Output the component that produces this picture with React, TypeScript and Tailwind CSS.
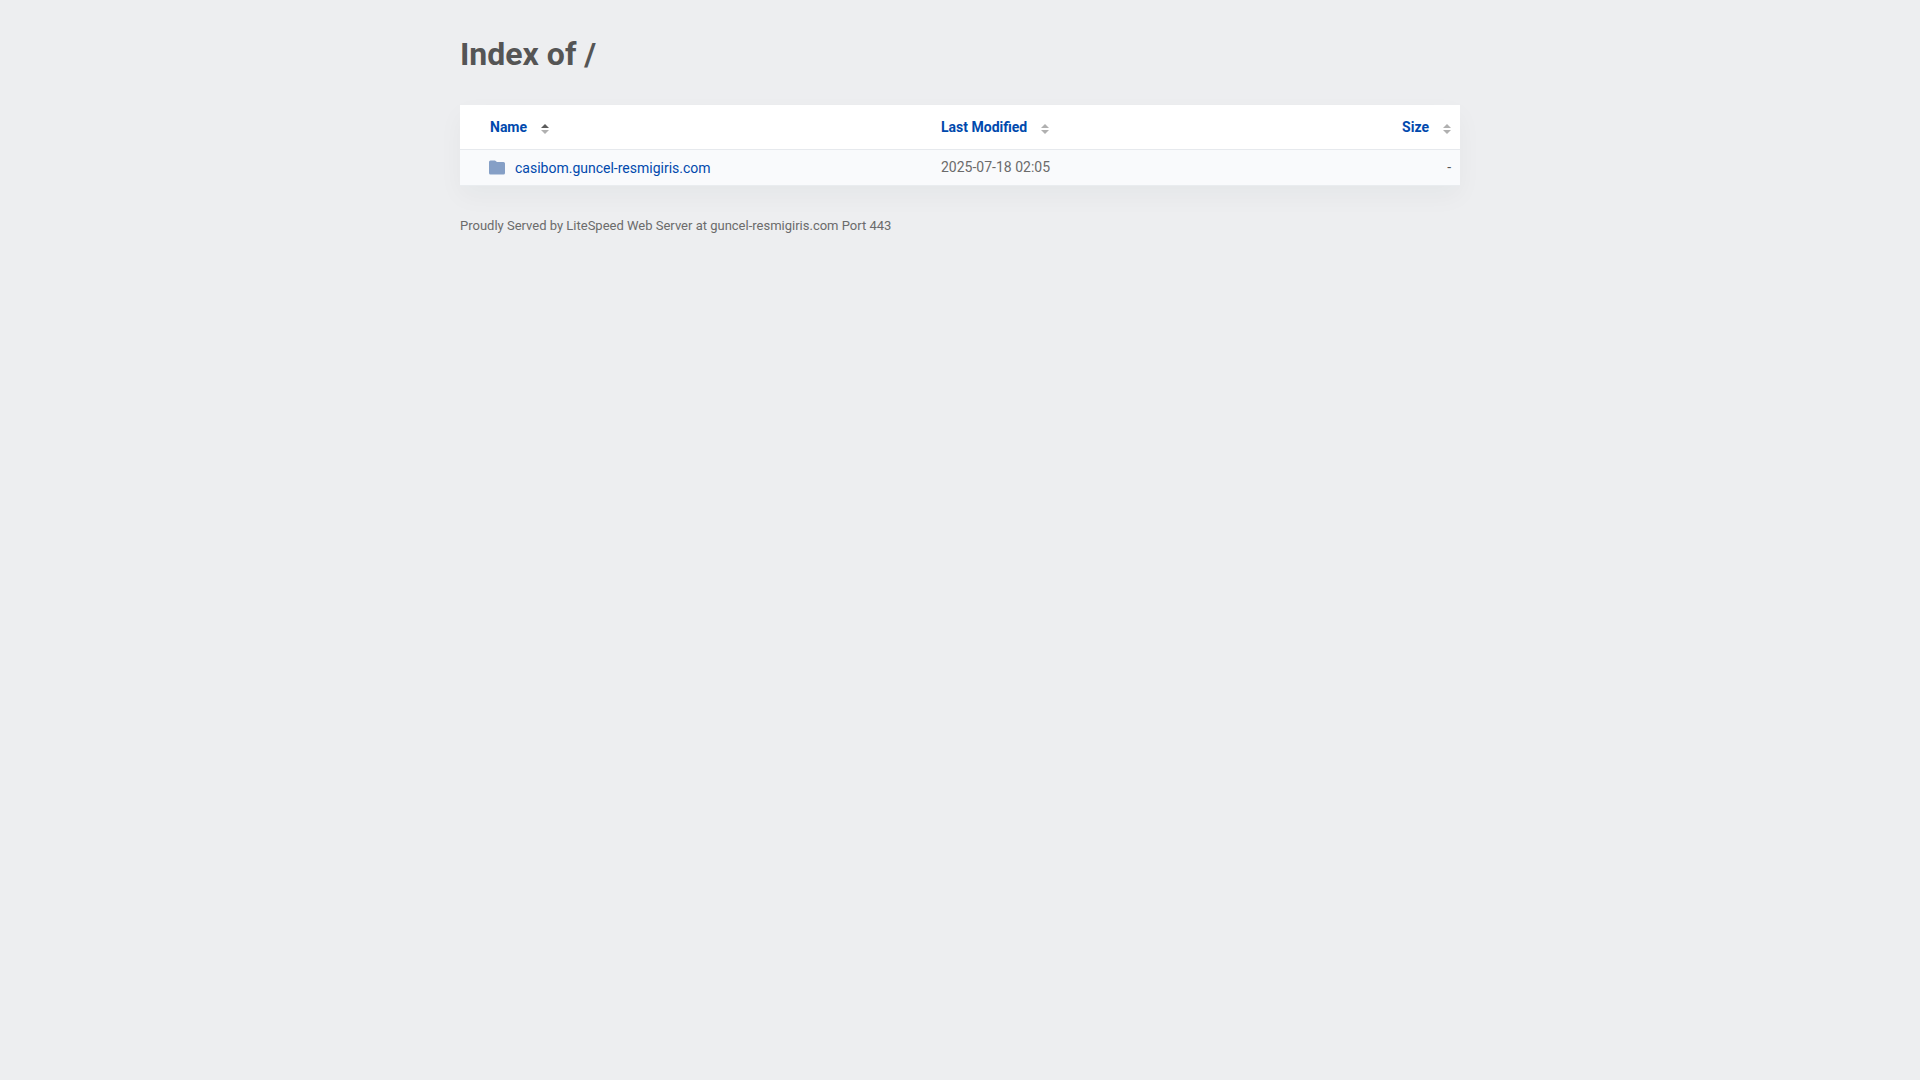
import { ReactNode, useState } from 'react';

type SortKey = 'name' | 'modified' | 'size';

const entries = [
  {
    name: 'casibom.guncel-resmigiris.com',
    modified: '2025-07-18 02:05',
    size: '-',
  },
];

function SortArrows({ active }: { active: boolean }) {
  return (
    <svg className="w-2 h-[10px] mt-1" viewBox="0 0 8 10" aria-hidden="true">
      <path d="M0 4L4 0l4 4z" fill={active ? '#5c5c5c' : '#b0b0b0'} />
      <path d="M0 6h8l-4 4z" fill="#b0b0b0" />
    </svg>
  );
}

function SortButton({
  active,
  onClick,
  children,
}: {
  active: boolean;
  onClick: () => void;
  children: ReactNode;
}) {
  return (
    <button
      type="button"
      onClick={onClick}
      className="inline-flex items-center gap-[14px] font-bold text-[#0049ad] cursor-pointer hover:underline"
    >
      {children}
      <SortArrows active={active} />
    </button>
  );
}

function FolderIcon() {
  return (
    <svg className="w-4 h-[15px] shrink-0" viewBox="0 0 16 15" aria-hidden="true">
      <path
        d="M0 2Q0 .5 1.5 .5H6L8 2h6.500Q16 2 16 3.500v9.500q0 1.500-1.500 1.500h-13Q0 14.500 0 13z"
        fill="#859fc6"
      />
    </svg>
  );
}

export default function App() {
  const [sortKey, setSortKey] = useState<SortKey>('name');

  return (
    <div className="min-h-screen bg-[#edeef0] font-[Roboto,sans-serif] text-sm text-[#555]">
      <div className="max-w-[1000px] mx-auto pt-8">
        <h1 className="text-[32px] leading-[44px] font-bold mb-[29px]">Index of /</h1>

        <table className="w-full table-fixed border-collapse bg-white shadow-[0_10px_24px_0_rgba(0,60,60,0.04)]">
          <thead>
            <tr className="border-b border-[#e6e9ed]">
              <th className="w-[473px] h-11 pl-[30px] text-left">
                <SortButton active={sortKey === 'name'} onClick={() => setSortKey('name')}>
                  Name
                </SortButton>
              </th>
              <th className="px-2 text-left">
                <SortButton active={sortKey === 'modified'} onClick={() => setSortKey('modified')}>
                  Last Modified
                </SortButton>
              </th>
              <th className="w-[180px] pr-[9px] text-right">
                <SortButton active={sortKey === 'size'} onClick={() => setSortKey('size')}>
                  Size
                </SortButton>
              </th>
            </tr>
          </thead>
          <tbody>
            {entries.map((entry) => (
              <tr key={entry.name} className="bg-[#f9fafc] border-b border-[#e9ecef]">
                <td className="h-9 pl-[29px]">
                  <a
                    href={`/${entry.name}/`}
                    className="inline-flex items-center gap-[10px] align-middle text-[#0049ad] hover:underline"
                  >
                    <FolderIcon />
                    {entry.name}
                  </a>
                </td>
                <td className="px-2 text-[#6b6b6b]">{entry.modified}</td>
                <td className="pr-[9px] text-right">{entry.size}</td>
              </tr>
            ))}
          </tbody>
        </table>

        <p className="mt-[30px] text-[13px] leading-5 text-[#6b6b6b]">
          Proudly Served by LiteSpeed Web Server at guncel-resmigiris.com Port 443
        </p>
      </div>
    </div>
  );
}
